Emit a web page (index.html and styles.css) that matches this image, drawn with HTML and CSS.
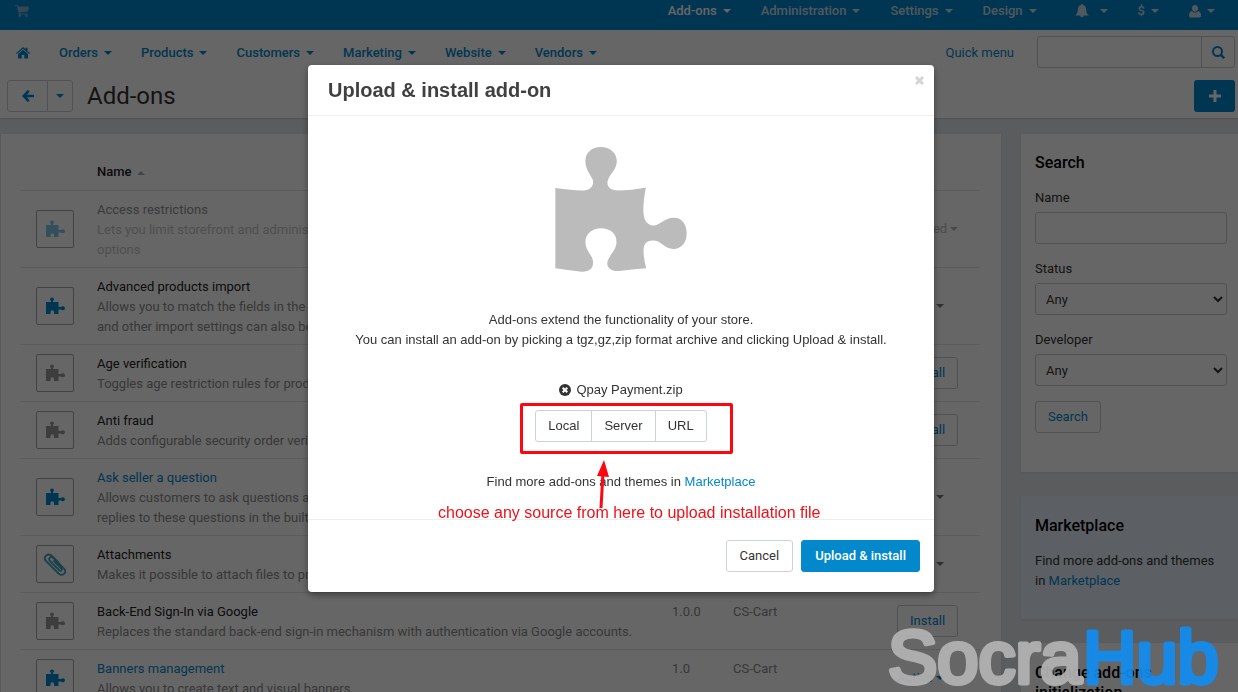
FILE: index.html
```html
<!DOCTYPE html>
<html lang="en">
<head>
  <meta charset="UTF-8" />
  <meta name="viewport" content="width=device-width, initial-scale=1.0" />
  <title>Add-ons</title>
  <link rel="stylesheet" href="styles.css">
</head>
<body>

  <!-- Shared icons -->
  <svg class="sprite" aria-hidden="true">
    <symbol id="puzzle" viewBox="77 50 393 374">
      <path d="M77 173Q140 182 165 180C185 178 195 160 188 146C180 130 167 115 167 92C167 65 188 50 213 50C240 50 261 68 261 92C261 118 240 130 234 150C230 168 240 180 265 180C290 180 320 176 348 171C342 200 338 235 342 258C346 275 358 287 375 285C395 280 405 262 432 262C458 262 470 285 470 308C470 335 455 355 430 355C405 355 395 332 372 330C352 328 341 340 341 358Q341 385 349 413Q290 418 268 421C243 423 230 410 233 393C240 370 260 360 260 333C260 308 240 293 213 293C188 293 167 310 167 333C167 362 188 372 190 393C191 412 180 424 155 423Q110 418 77 413Z"/>
    </symbol>
    <symbol id="piece" viewBox="0 0 19 17">
      <path d="M0 5H5V4L4 2.500A2 2 0 1 1 8 2.500L7 4V5H12.500V10H14.500L16 9.500A2 2 0 1 1 16 13L14.500 12.500H12.500V17H8V15A1.700 1.700 0 1 0 4.500 15V17H0Z"/>
    </symbol>
  </svg>

  <div class="page">
    <nav class="topbar">
      <a href="#" class="cart" aria-label="Storefront">
        <svg width="14" height="12" viewBox="0 0 14 12"><path fill="currentColor" d="M0 0H2.800L3.200 1.500H14L13 6.500L4.500 7.500L4.700 8.500H12.500V9.500H3.800L2 1H0Z"/><circle fill="currentColor" cx="4.700" cy="10.800" r="1.200"/><circle fill="currentColor" cx="11.500" cy="10.800" r="1.200"/></svg>
      </a>
      <a href="#" class="drop current">Add-ons</a>
      <a href="#" class="drop">Administration</a>
      <a href="#" class="drop">Settings</a>
      <a href="#" class="drop">Design</a>
      <a href="#" class="drop bell" aria-label="Notifications">
        <svg width="14" height="14" viewBox="0 0 14 14"><path fill="currentColor" d="M7 0C7.700 0 8 .5 8 1.100C10.300 1.600 11.200 3.500 11.200 5.500C11.200 8.500 12 9.800 13.800 11.500H8.800A1.800 1.800 0 0 1 5.200 11.500H.2C2 9.800 2.800 8.500 2.800 5.500C2.800 3.500 3.700 1.600 6 1.100C6 .5 6.300 0 7 0Z"/></svg>
      </a>
      <a href="#" class="drop">$</a>
      <a href="#" class="drop" aria-label="Account">
        <svg width="12" height="13" viewBox="0 0 12 13"><path fill="currentColor" d="M6 0C8 0 9 1.500 9 3.300C9 5.300 7.700 6.800 6 6.800C4.300 6.800 3 5.300 3 3.300C3 1.500 4 0 6 0ZM3 6C4.700 8 7.300 8 9 6C11 6.300 12 8 12 10.500C12 12 11 12.500 10 12.500H2C1 12.500 0 12 0 10.500C0 8 1 6.300 3 6Z"/></svg>
      </a>
    </nav>

    <header class="subhead">
      <nav class="menu">
        <a href="#" class="home" aria-label="Home">
          <svg width="14" height="12" viewBox="0 0 14 12"><path fill="currentColor" d="M7 0L9.500 2.200V.8H11.500V4L14 6.200L13.200 7L7 1.700L.8 7L0 6.200ZM7 2.800L12 7V11.500H8.300V8H5.700V11.500H2V7Z"/></svg>
        </a>
        <a href="#" class="drop">Orders</a>
        <a href="#" class="drop">Products</a>
        <a href="#" class="drop">Customers</a>
        <a href="#" class="drop">Marketing</a>
        <a href="#" class="drop">Website</a>
        <a href="#" class="drop">Vendors</a>
        <a href="#" class="quick">Quick menu</a>
        <form class="search">
          <input type="text" aria-label="Search the store">
          <button type="button" aria-label="Find">
            <svg width="13" height="13" viewBox="0 0 13 13" fill="none" stroke="currentColor"><circle cx="5.500" cy="5.500" r="4.500" stroke-width="2"/><path d="M8.800 8.800L12.200 12.200" stroke-width="2.400"/></svg>
          </button>
        </form>
      </nav>
      <div class="actions">
        <div class="btn-group">
          <button type="button" class="back" aria-label="Back">
            <svg width="12" height="12" viewBox="0 0 12 12" fill="none" stroke="currentColor" stroke-width="2.600"><path d="M6.800 .8L1.700 6L6.800 11.200M2 6H12"/></svg>
          </button>
          <button type="button" class="more" aria-label="History"><span class="caret"></span></button>
        </div>
        <h1>Add-ons</h1>
        <button type="button" class="add" aria-label="Upload add-on">
          <svg width="12" height="12" viewBox="0 0 12 12" stroke="currentColor" stroke-width="3"><path d="M6 0V12M0 6H12"/></svg>
        </button>
      </div>
    </header>

    <main class="content">
      <section class="panel list">
        <table>
          <thead>
            <tr>
              <th class="col-icon"></th>
              <th>Name <span class="sort"></span></th>
              <th class="col-version"></th>
              <th class="col-dev"></th>
              <th class="col-status">Status</th>
            </tr>
          </thead>
          <tbody>
            <tr class="off">
              <td><span class="icon"><svg><use href="#piece"/></svg></span></td>
              <td><div>Access restrictions</div><p>Lets you limit storefront and administration panel access, and set other<br>options</p></td>
              <td class="meta">1.0</td><td class="meta">CS-Cart</td>
              <td class="status"><a href="#" class="drop">Disabled</a></td>
            </tr>
            <tr>
              <td><span class="icon"><svg><use href="#piece"/></svg></span></td>
              <td><div>Advanced products import</div><p>Allows you to match the fields in the imported file with product data,<br>and other import settings can also be saved.</p></td>
              <td class="meta">1.0</td><td class="meta">CS-Cart</td>
              <td class="status"><a href="#" class="drop">Active</a></td>
            </tr>
            <tr>
              <td><span class="icon gray"><svg><use href="#piece"/></svg></span></td>
              <td><div>Age verification</div><p>Toggles age restriction rules for products.</p></td>
              <td class="meta">1.0</td><td class="meta">CS-Cart</td>
              <td class="status"><button type="button" class="btn">Install</button></td>
            </tr>
            <tr>
              <td><span class="icon gray"><svg><use href="#piece"/></svg></span></td>
              <td><div>Anti fraud</div><p>Adds configurable security order verification.</p></td>
              <td class="meta">1.0</td><td class="meta">CS-Cart</td>
              <td class="status"><button type="button" class="btn">Install</button></td>
            </tr>
            <tr>
              <td><span class="icon"><svg><use href="#piece"/></svg></span></td>
              <td><div><a href="#">Ask seller a question</a></div><p>Allows customers to ask questions about products and vendors to send<br>replies to these questions in the built-in message center.</p></td>
              <td class="meta">1.0</td><td class="meta">CS-Cart</td>
              <td class="status"><a href="#" class="drop">Active</a></td>
            </tr>
            <tr>
              <td><span class="icon clip"><svg viewBox="0 0 24 24" fill="none" stroke="currentColor" stroke-width="1.800" stroke-linecap="round"><path d="M15.500 10.500L9 4C5.500 .5 0 4 2.500 8.500L15.500 21.500C19.500 25 24.500 20.500 21 16.500L10.500 6C8 3.500 4.500 6.500 7 9L16.500 18.500C18 19.500 19.500 18 18.500 16.500L11 9"/></svg></span></td>
              <td><div>Attachments</div><p>Makes it possible to attach files to products.</p></td>
              <td class="meta">1.0</td><td class="meta">CS-Cart</td>
              <td class="status"><a href="#" class="drop">Active</a></td>
            </tr>
            <tr>
              <td><span class="icon gray"><svg><use href="#piece"/></svg></span></td>
              <td><div>Back-End Sign-In via Google</div><p>Replaces the standard back-end sign-in mechanism with authentication via Google accounts.</p></td>
              <td class="meta">1.0.0</td><td class="meta">CS-Cart</td>
              <td class="status"><button type="button" class="btn">Install</button></td>
            </tr>
            <tr>
              <td><span class="icon"><svg><use href="#piece"/></svg></span></td>
              <td><div><a href="#">Banners management</a></div><p>Allows you to create text and visual banners</p></td>
              <td class="meta">1.0</td><td class="meta">CS-Cart</td>
              <td class="status"><a href="#" class="drop link">Active</a></td>
            </tr>
          </tbody>
        </table>
      </section>

      <aside class="sidebar">
        <form class="panel">
          <h2>Search</h2>
          <label for="name">Name</label>
          <input type="text" id="name">
          <label for="status">Status</label>
          <select id="status"><option>Any</option></select>
          <label for="developer">Developer</label>
          <select id="developer"><option>Any</option></select>
          <button type="button" class="btn">Search</button>
        </form>
        <div class="panel market">
          <h2>Marketplace</h2>
          <p>Find more add-ons and themes in <a href="#">Marketplace</a></p>
        </div>
        <div class="panel">
          <h2>Change add-ons initialization</h2>
        </div>
      </aside>
    </main>
  </div>

  <!-- Upload dialog -->
  <div class="backdrop">
    <div class="modal" role="dialog" aria-labelledby="modal-title">
      <div class="modal-header">
        <h3 id="modal-title">Upload &amp; install add-on</h3>
        <button type="button" class="close" aria-label="Close">
          <svg width="9" height="9" viewBox="0 0 9 9" stroke="currentColor" stroke-width="3"><path d="M1 1L8 8M8 1L1 8"/></svg>
        </button>
      </div>
      <div class="modal-body">
        <svg class="hero"><use href="#puzzle"/></svg>
        <p>Add-ons extend the functionality of your store.<br>You can install an add-on by picking a tgz,gz,zip format archive and clicking Upload &amp; install.</p>
        <div class="file">
          <button type="button" class="remove" aria-label="Remove file">
            <svg width="12" height="12" viewBox="0 0 12 12"><circle cx="6" cy="6" r="6" fill="#333"/><path d="M3.700 3.700L8.300 8.300M8.300 3.700L3.700 8.300" stroke="#fff" stroke-width="2"/></svg>
          </button>
          <span>Qpay Payment.zip</span>
        </div>
        <div class="sources">
          <button type="button">Local</button>
          <button type="button">Server</button>
          <button type="button">URL</button>
        </div>
        <p>Find more add-ons and themes in <a href="#">Marketplace</a></p>
        <div class="hint">
          <div class="hint-box"></div>
          <svg width="14" height="50" viewBox="0 0 14 50"><path d="M5 48L7 12" stroke="#ff0510" stroke-width="3"/><path d="M8 0L13 17L1 16Z" fill="#ff0510"/></svg>
          <span>choose any source from here to upload installation file</span>
        </div>
      </div>
      <div class="modal-footer">
        <button type="button" class="cancel">Cancel</button>
        <button type="button" class="submit">Upload &amp; install</button>
      </div>
    </div>
  </div>

  <svg class="watermark" width="340" height="72" viewBox="0 0 340 72">
    <text class="socra" x="2" y="63">Socra</text>
    <text class="hub" x="197" y="63">Hub</text>
  </svg>

</body>
</html>
```
FILE: styles.css
```css
* {
  box-sizing: border-box;
  margin: 0;
  padding: 0;
}

body {
  background-color: #e1e6ea;
  color: #333;
  font-family: Roboto, "Liberation Sans", sans-serif;
  font-size: 13px;
  line-height: 20px;
}

a {
  color: #0388cc;
  text-decoration: none;
}

button,
input,
select {
  font: inherit;
}

button {
  cursor: pointer;
}

svg {
  display: block;
}

.sprite {
  position: absolute;
  width: 0;
  height: 0;
}

.page {
  height: 100vh;
  overflow: hidden;
}

.drop {
  display: flex;
  align-items: center;
  gap: 6px;
}

.drop::after,
.caret {
  content: "";
  border: 4px solid transparent;
  border-top-color: currentColor;
  border-bottom: none;
}

/* Top bar */
.topbar {
  height: 30px;
  background: #0388cc;
  display: flex;
  gap: 30px;
  padding: 0 23px 8px 15px;
}

.topbar a {
  display: flex;
  align-items: center;
  color: #c8dce8;
  font-weight: 500;
}

.topbar .cart {
  color: #7fb5d4;
  margin-right: auto;
}

.topbar .current {
  color: #fff;
}

.topbar .bell {
  margin-left: 8px;
  gap: 11px;
}

/* Main menu */
.subhead {
  background: #fff;
  box-shadow: 0 1px 2px rgba(0, 0, 0, 0.12);
}

.menu {
  display: flex;
  align-items: center;
  gap: 29px;
  height: 44px;
  padding: 0 3px 0 16px;
}

.menu a {
  padding-top: 1px;
  font-weight: 500;
}

.menu .quick {
  margin-left: auto;
  font-weight: 400;
}

.search {
  display: flex;
  width: 198px;
  height: 32px;
  margin-left: -6px;
  border: 1px solid #c4ccd0;
  border-radius: 3px;
}

.search input {
  flex: 1;
  min-width: 0;
  border: none;
  background: none;
}

.search button {
  display: grid;
  place-items: center;
  width: 33px;
  border: none;
  border-left: 1px solid #c4ccd0;
  background: none;
  color: #0388cc;
}

.actions {
  display: flex;
  align-items: center;
  height: 44px;
  padding: 0 3px 0 7px;
}

.btn-group {
  display: flex;
  height: 32px;
  border: 1px solid #c8ced2;
  border-radius: 3px;
}

.btn-group button {
  display: grid;
  place-items: center;
  border: none;
  background: none;
  color: #0388cc;
}

.btn-group .back {
  width: 39px;
}

.btn-group .more {
  width: 25px;
  border-left: 1px solid #c8ced2;
}

h1 {
  margin-left: 14px;
  font-size: 24px;
  font-weight: 400;
}

.add {
  display: grid;
  place-items: center;
  width: 41px;
  height: 32px;
  margin-left: auto;
  border: none;
  border-radius: 3px;
  background: #0388cc;
  color: #fff;
}

/* Content */
.content {
  display: flex;
  gap: 20px;
  padding: 16px 0 0 1px;
}

.panel {
  background: #fff;
  box-shadow: 0 1px 3px rgba(0, 0, 0, 0.06);
}

.list {
  flex: 1;
  padding: 20px 21px 20px 19px;
}

table {
  width: 100%;
  table-layout: fixed;
  border-collapse: collapse;
}

th {
  height: 36px;
  padding: 1px 8px 0;
  text-align: left;
  font-weight: 500;
  color: #222;
}

td {
  padding: 9px 8px 7px;
  border-top: 1px solid #e4e4e4;
  vertical-align: top;
  color: #222;
}

td:first-child {
  padding: 8px 8px 8px 16px;
  vertical-align: middle;
}

td p,
td.meta {
  color: #8c8c8c;
}

.col-icon {
  width: 69px;
}

.col-version {
  width: 61px;
}

.col-dev {
  width: 164px;
}

.col-status {
  width: 91px;
}

.sort {
  display: inline-block;
  margin-left: 2px;
  vertical-align: middle;
  border: 4px solid transparent;
  border-top: none;
  border-bottom-color: #aaa;
}

.icon {
  display: grid;
  place-items: center;
  width: 38px;
  height: 38px;
  border: 1px solid #a8a8a8;
  border-radius: 2px;
  color: #0388cc;
}

.icon svg {
  width: 19px;
  height: 17px;
  fill: currentColor;
}

.icon.gray {
  color: #999;
}

.icon.clip {
  color: #3fa4b8;
}

.icon.clip svg {
  width: 24px;
  height: 24px;
  fill: none;
}

.off td:not(:first-child) > * {
  opacity: 0.5;
}

.off .icon svg {
  opacity: 0.5;
}

td.status {
  padding: 8px;
  vertical-align: middle;
}

.status .drop {
  gap: 3px;
  color: #777;
}

.status .link {
  color: #0388cc;
}

.btn {
  height: 32px;
  padding: 0 12px;
  border: 1px solid #c4ccd0;
  border-radius: 3px;
  background: none;
  color: #0388cc;
}

/* Sidebar */
.sidebar {
  width: 217px;
  display: flex;
  flex-direction: column;
  gap: 24px;
}

.sidebar .panel {
  padding: 20px 11px 28px 14px;
}

.sidebar form.panel {
  padding: 19px 11px 39px 14px;
}

.sidebar .market {
  background: #e6effa;
}

h2 {
  font-size: 16px;
  font-weight: 500;
  color: #000;
  margin-bottom: 15px;
}

.sidebar label {
  display: block;
  margin-bottom: 4px;
}

.sidebar input,
.sidebar select {
  display: block;
  width: 100%;
  height: 32px;
  margin-bottom: 15px;
  padding: 0 6px;
  border: 1px solid #c4ccd0;
  border-radius: 3px;
  background: #fff;
  color: #333;
}

/* Modal */
.backdrop {
  position: fixed;
  inset: 0;
  padding: 65px 304px 0 308px;
  background: rgba(0, 0, 0, 0.6);
}

.modal {
  background: #fff;
  border-radius: 4px;
  box-shadow: 0 3px 7px rgba(0, 0, 0, 0.4);
  font-family: "Liberation Sans", Arial, sans-serif;
}

.modal-header {
  display: flex;
  justify-content: space-between;
  align-items: flex-start;
  height: 51px;
  padding: 11px 10px 0 20px;
  border-bottom: 1px solid #eee;
}

h3 {
  color: #404040;
  font-size: 20px;
  line-height: 28px;
}

.close,
.remove {
  border: none;
  background: none;
}

.close {
  color: #d5d5d5;
}

.modal-body {
  position: relative;
  display: flex;
  flex-direction: column;
  align-items: center;
  padding: 31px 0 27px;
  text-align: center;
}

.hero {
  width: 132px;
  height: 125px;
  margin-bottom: 38px;
  fill: #bbb;
}

.file {
  display: flex;
  align-items: center;
  gap: 5px;
  margin: 30px 0 10px;
}

.sources {
  display: flex;
  height: 32px;
  margin-bottom: 30px;
  border: 1px solid #ccd3d6;
  border-radius: 3px;
}

.sources button {
  padding: 0 12px;
  border: none;
  background: none;
  color: #333;
}

.sources button + button {
  border-left: 1px solid #ccd3d6;
}

/* Red note over the source buttons */
.hint {
  position: absolute;
  top: 287px;
  left: 50%;
  width: 384px;
  margin-left: -183px;
  color: #f01018;
  font-size: 16px;
  white-space: nowrap;
}

.hint-box {
  width: 213px;
  height: 51px;
  margin-left: 82px;
  border: 3px solid #ff0510;
  border-radius: 2px;
}

.hint svg {
  position: absolute;
  top: 57px;
  left: 158px;
}

.hint span {
  position: absolute;
  top: 100px;
  left: 0;
}

.modal-footer {
  display: flex;
  justify-content: flex-end;
  gap: 8px;
  padding: 20px 14px;
  border-top: 1px solid #eee;
  font-family: Roboto, "Liberation Sans", sans-serif;
}

.modal-footer button {
  height: 32px;
  padding: 0 13px;
  border: 1px solid #ccd3d6;
  border-radius: 3px;
  background: #fff;
  color: #333;
}

.modal-footer .submit {
  border-color: #0388cc;
  background: #0388cc;
  color: #fff;
  font-weight: 500;
}

/* Site logo over the corner */
.watermark {
  position: fixed;
  right: 12px;
  bottom: 0;
  font-family: "Liberation Sans", Arial, sans-serif;
  font-size: 74px;
  stroke-width: 5px;
  stroke-linejoin: round;
  opacity: 0.92;
}

.socra {
  fill: #b4b4b4;
  stroke: #b4b4b4;
}

.hub {
  fill: #128df0;
  stroke: #128df0;
}
```
